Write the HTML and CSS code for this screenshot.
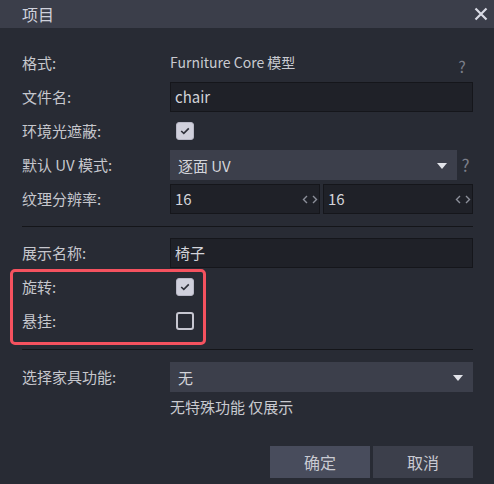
FILE: index.html
```html
<!DOCTYPE html>
<html lang="zh">
<head>
<meta charset="utf-8">
<title>项目</title>
<link rel="stylesheet" href="styles.css">
</head>
<body>
<div class="dialog">
  <div class="titlebar">
    <span class="title">项目</span>
    <svg class="close" width="14" height="14" viewBox="0 0 14 14"><path d="M1.5 1.5 L12.5 12.5 M12.5 1.5 L1.5 12.5" stroke="#d8dae4" stroke-width="2.2" fill="none"/></svg>
  </div>
  <div class="content">
    <div class="section">
      <div class="row">
        <span class="label">格式:</span>
        <div class="field static"><span class="value">Furniture Core 模型</span><span class="help">?</span></div>
      </div>
      <div class="row">
        <span class="label">文件名:</span>
        <div class="field"><div class="input">chair</div></div>
      </div>
      <div class="row">
        <span class="label">环境光遮蔽:</span>
        <div class="field"><span class="check on"><svg width="10" height="8" viewBox="0 0 10 8"><path d="M1.2 4 L3.8 6.4 L8.8 1.4" stroke="#2e303a" stroke-width="1.6" fill="none"/></svg></span></div>
      </div>
      <div class="row">
        <span class="label">默认 UV 模式:</span>
        <div class="field"><div class="select narrow"><span>逐面 UV</span><span class="caret"></span></div><span class="help side">?</span></div>
      </div>
      <div class="row">
        <span class="label">纹理分辨率:</span>
        <div class="field pair">
          <div class="input num"><span>16</span><svg class="spin" width="16" height="9" viewBox="0 0 16 9"><path d="M5 1 L1.5 4.5 L5 8 M11 1 L14.5 4.5 L11 8" stroke="#8c8f9a" stroke-width="1.4" fill="none"/></svg></div>
          <div class="input num"><span>16</span><svg class="spin" width="16" height="9" viewBox="0 0 16 9"><path d="M5 1 L1.5 4.5 L5 8 M11 1 L14.5 4.5 L11 8" stroke="#8c8f9a" stroke-width="1.4" fill="none"/></svg></div>
        </div>
      </div>
    </div>
    <div class="sep sep1"></div>
    <div class="section">
      <div class="row">
        <span class="label">展示名称:</span>
        <div class="field"><div class="input">椅子</div></div>
      </div>
      <div class="group">
        <div class="row">
          <span class="label">旋转:</span>
          <div class="field"><span class="check on"><svg width="10" height="8" viewBox="0 0 10 8"><path d="M1.2 4 L3.8 6.4 L8.8 1.4" stroke="#2e303a" stroke-width="1.6" fill="none"/></svg></span></div>
        </div>
        <div class="row">
          <span class="label">悬挂:</span>
          <div class="field"><span class="check off"></span></div>
        </div>
        <div class="highlight"></div>
      </div>
    </div>
    <div class="sep sep2"></div>
    <div class="section">
      <div class="row">
        <span class="label">选择家具功能:</span>
        <div class="field"><div class="select"><span>无</span><span class="caret"></span></div></div>
      </div>
      <div class="row hint-row">
        <span></span>
        <span class="hint">无特殊功能 仅展示</span>
      </div>
    </div>
    <div class="buttons">
      <button class="btn primary">确定</button>
      <button class="btn">取消</button>
    </div>
  </div>
</div>
</body>
</html>
```

FILE: styles.css
```css
* { box-sizing: border-box; }
html, body {
  margin: 0;
  padding: 0;
  background: #282b34;
  font-family: "Noto Sans CJK SC", "Noto Sans", sans-serif;
  color: #c7c8ce;
}
.dialog {
  width: 494px;
  height: 484px;
  background: #282b34;
}
.titlebar {
  height: 28px;
  background: #3b3e4a;
  display: flex;
  align-items: center;
  justify-content: space-between;
  padding: 0 6px 0 22px;
}
.title {
  font-size: 16px;
  color: #cfd1dc;
  line-height: 28px;
}
.close { display: block; margin-top: -1px; }
.content {
  padding: 20px 21px 0 22px;
}
.section {
  display: flex;
  flex-direction: column;
  gap: 4px;
}
.row {
  display: grid;
  grid-template-columns: 148px 1fr;
  height: 30px;
  align-items: center;
}
.label {
  font-size: 15px;
  color: #c6c7cd;
  line-height: 30px;
}
.field {
  display: flex;
  align-items: center;
  height: 30px;
}
.static {
  justify-content: space-between;
}
.value {
  font-size: 14px;
  color: #c9cad0;
  margin-top: -2px;
}
.help {
  font-size: 16px;
  color: #7b7e89;
  width: 16px;
  text-align: center;
  margin-right: 3px;
  margin-top: 6px;
}
.help.side {
  font-size: 17px;
  margin-left: 1px;
  margin-right: 0;
  margin-top: -2px;
  width: 15px;
}
.input {
  width: 100%;
  height: 30px;
  background: #1f2128;
  border: 1px solid #15161b;
  font-size: 15px;
  color: #d3d4da;
  padding: 0 4px;
  line-height: 28px;
}
.pair { gap: 3px; }
.num {
  width: 150px;
  flex: none;
  display: flex;
  align-items: center;
  justify-content: space-between;
  padding-right: 1px;
}
.spin { display: block; }
.select {
  flex: 1;
  height: 30px;
  background: #3c3f4b;
  display: flex;
  align-items: center;
  justify-content: space-between;
  padding: 0 10px 0 8px;
  font-size: 15px;
  color: #d3d4da;
}
.select.narrow { padding-right: 10px; }
.caret {
  width: 0;
  height: 0;
  border-left: 5.5px solid transparent;
  border-right: 5.5px solid transparent;
  border-top: 6px solid #e2e3e9;
  margin-top: 1px;
}
.check {
  width: 18px;
  height: 18px;
  border-radius: 3px;
  margin-left: 6px;
  display: flex;
  align-items: center;
  justify-content: center;
}
.check.on {
  background: #d0d0dc;
  border: 1px solid #b8b8c6;
}
.check.off {
  border: 2px solid #c7c7d1;
}
.group {
  position: relative;
  display: flex;
  flex-direction: column;
  gap: 4px;
}
.highlight {
  position: absolute;
  top: -3px;
  left: -12px;
  width: 196px;
  height: 76px;
  border: 3px solid #f5525f;
  border-radius: 5px;
  pointer-events: none;
}
.sep {
  height: 1px;
  background: #141519;
}
.sep1 { margin: 12px 0 11px; }
.sep2 { margin: 13px 0 12px; }
.hint-row { height: 22px; }
.hint {
  font-size: 15px;
  color: #c9cad0;
  line-height: 22px;
}
.buttons {
  display: flex;
  justify-content: flex-end;
  gap: 3px;
  margin-top: 28px;
}
.btn {
  width: 100px;
  height: 32px;
  border: none;
  background: #3c3f4b;
  color: #c9cad2;
  font-family: "Noto Sans CJK SC", sans-serif;
  font-size: 16px;
  padding: 0;
}
.btn.primary { background: #484c5c; }
```
